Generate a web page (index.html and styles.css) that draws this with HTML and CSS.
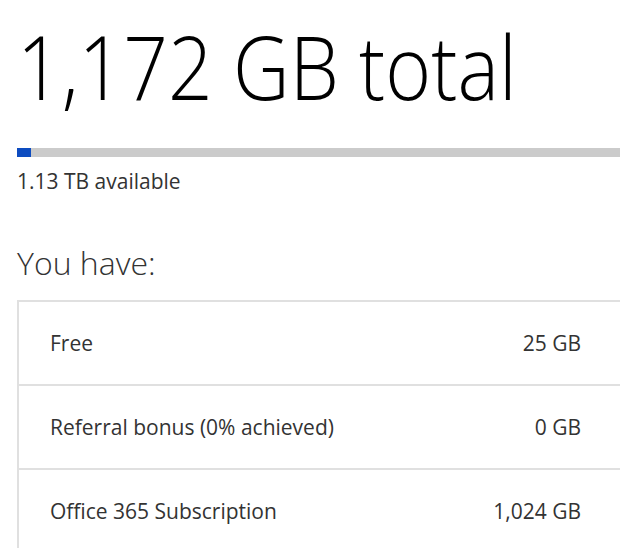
FILE: index.html
```html
<!DOCTYPE html>
<html lang="en">
<head>
    <meta charset="UTF-8">
    <meta name="viewport" content="width=device-width, initial-scale=1.0">
    <title>Storage</title>
    <link rel="stylesheet" href="styles.css">
</head>
<body>
    <div class="storage">
        <h1 class="total">1,172 GB total</h1>
        <div class="usage-bar">
            <div class="usage-fill" style="width:14px;"></div>
        </div>
        <div class="available">1.13 TB available</div>
        <h2 class="have-title">You have:</h2>
        <div class="plans">
            <div class="plan-row">
                <span class="plan-name">Free</span>
                <span class="plan-size">25 GB</span>
            </div>
            <div class="plan-row">
                <span class="plan-name">Referral bonus (0% achieved)</span>
                <span class="plan-size">0 GB</span>
            </div>
            <div class="plan-row">
                <span class="plan-name">Office 365 Subscription</span>
                <span class="plan-size">1,024 GB</span>
            </div>
        </div>
    </div>
</body>
</html>
```

FILE: styles.css
```css
body {
    margin: 0;
    font-family: "Open Sans", Arial, sans-serif;
    color: #333;
    background-color: #fff;
    overflow: hidden;
}
.storage {
    padding-left: 17px;
}
.total {
    margin: 22px 0 0 0;
    font-size: 88px;
    font-weight: 300;
    line-height: 88px;
    color: #000;
    white-space: nowrap;
    transform: scaleX(0.89);
    transform-origin: left center;
}
.usage-bar {
    margin-top: 38px;
    height: 9px;
    background-color: #cbcbcb;
}
.usage-fill {
    height: 100%;
    background-color: #0d4cc0;
}
.available {
    margin-top: 12px;
    font-size: 21px;
    line-height: 24px;
}
.have-title {
    margin: 50px 0 0 0;
    font-size: 32px;
    font-weight: 300;
    line-height: 40px;
}
.plans {
    margin-top: 17px;
    border-top: 2px solid #e0e0e0;
    border-left: 2px solid #e0e0e0;
}
.plan-row {
    display: flex;
    justify-content: space-between;
    align-items: center;
    height: 82px;
    padding: 0 39px 0 31px;
    border-bottom: 2px solid #e0e0e0;
    font-size: 21px;
}
```
